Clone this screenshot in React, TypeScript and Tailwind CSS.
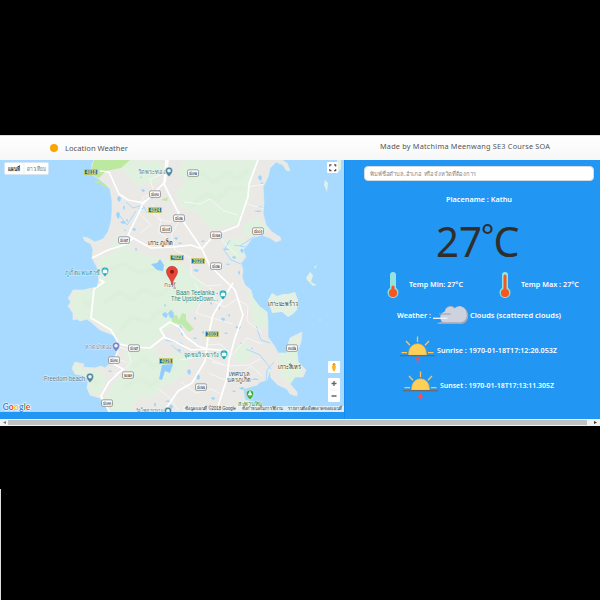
import React from "react";

const land =
  "M94 160L92 164L91 174L99 179L106 185L110 189L112 200L112 213L111 222L108 232L103 239L95 242L88 238L83 237L85 241L91 244L93 250L92 258L97 267L99 280L97 287L83 290L73 290L71 294L68 298L71 302L68 306L73 313L73 320L77 319L80 321L87 319L92 323L100 330L113 335L118 343L117 352L112 362L105 368L101 366L95 368L83 367L84 364L75 362L72 368L75 374L85 376L88 382L87 388L90 395L100 398L105 405L109 413L264 413L258 403L245 400L243 389L257 385L260 382L267 380L270 370L271 378L278 385L287 389L290 394L297 396L297 392L290 384L295 377L303 377L306 370L298 362L297 352L301 342L302 332L290 338L288 345L287 353L278 353L275 347L268 337L268 323L267 312L260 307L253 298L251 290L245 285L242 277L243 270L241 263L246 257L243 250L248 244L252 238L262 235L270 238L276 242L281 240L280 237L272 232L266 225L263 213L264 203L263 187L268 177L270 168L276 162L283 165L286 170L290 171L287 163L282 160Z";

const forests = [
  "M184 160L258 160L253 176L250 196L239 222L228 226L210 229L197 212L180 207L176 194L187 181L177 174Z",
  "M98 259L125 248L153 257L180 263L204 284L195 309L181 321L168 328L152 345L122 346L112 333L96 320L78 320L71 305L72 293L96 289L101 279Z",
  "M125 351L154 346L159 360L178 353L191 357L184 375L164 386L151 398L139 396L129 413L112 412L105 398L117 379L128 369Z",
  "M74 363L83 370L101 370L106 380L98 396L90 391L86 376L74 373Z",
  "M115 164L124 171L136 185L158 182L155 165L141 160Z",
  "M236 346L247 343L253 354L244 364L234 360Z",
  "M278 357L289 343L300 334L297 351L303 375L291 385L280 375Z",
  "M247 284L255 298L266 311L267 328L254 325L251 307Z",
  "M244 224L259 219L270 230L258 235L244 236Z",
  "M118 235L133 239L128 248L110 250Z",
  "M140 163L154 176L165 171L160 161Z",
  "M224 239L246 239L240 252L245 258L231 258Z",
];

const roads = [
  "M100 171L109 172L119 194L128 200L144 203L165 182L168 160",
  "M166 160L164 184L181 218L202 249L210 266L235 290L243 315L235 338L229 360L227 378L216 413",
  "M92 258L108 250L127 244L133 238L151 248L173 247L191 245L202 249L214 235L238 226L248 197L249 184L258 160",
  "M133 238L128 235L145 200",
  "M94 289L104 282L97 278M94 289L91 318L111 330L119 344L134 347L150 348L164 337L176 342L191 350L207 349",
  "M119 344L114 364L123 369L109 382L101 396L110 413",
  "M233 283L213 315L208 337L205 361L192 383L178 391L165 410",
  "M166 339L160 329L170 322L179 327L186 337L198 346L207 349L229 351",
];
const lanes = [
  "M168 172L150 179L154 193L143 197L139 213L151 225L140 233",
  "M152 204L161 220L158 232L169 239M180 211L170 222L158 219L151 210",
  "M181 218L171 235L175 250L191 258L191 275L206 286L221 285",
  "M184 202L200 204L210 199L224 211L238 215",
  "M248 187L264 184M247 204L265 209M217 234L225 244L237 255",
  "M195 284L203 298L196 313L216 319L233 324",
  "M207 345L220 344L232 355L247 338L262 344M212 362L229 366L249 365L260 359",
  "M209 373L222 379L236 378L251 366L262 376M180 360L204 356L224 365",
  "M181 382L196 393L211 389L223 395M159 389L170 398L178 410",
  "M210 287L216 303L225 307L237 299L248 306L247 321L262 333",
  "M114 374L124 370L131 362L128 350L119 347M112 357L126 362",
];
const minorTerrain = [
  "M188 180L202 173L213 183L227 172L237 179L249 169",
  "M191 206L207 193L217 200L229 188L243 189",
  "M105 270L124 264L139 273L157 268L170 279",
  "M103 304L119 292L132 300L144 289L158 297L171 285L182 295",
  "M120 331L131 317L148 322L161 310L174 311",
  "M132 367L145 359L153 366L166 363L176 370M124 387L139 379L151 386L160 379",
  "M83 299L90 306M88 379L98 384",
];
const lakes = [
  [117,198,2,4],[116,214,2,5],[123,207,1,3],[120,222,3,2],[126,220,1,2],[141,190,2,2],[140,177,1,1],[151,197,1,2],[138,208,3,1],[132,229,2,2],[124,230,1,1],[135,249,1,2],[174,238,2,2],[178,243,2,1],[193,270,3,2],[201,241,2,1],[222,249,4,1],[232,257,2,2],[226,264,2,1],[240,250,2,3],[238,272,1,3],[258,177,2,4],[260,183,2,1],[257,207,3,1],[254,211,4,1],[162,314,3,4],[164,305,1,2],[168,313,3,6],[178,327,2,4],[181,333,1,3],[193,338,2,1],[177,350,2,2],[202,332,1,2],[224,333,2,1],[221,319,2,3],[228,315,1,2],[235,327,3,2],[187,371,2,4],[196,376,2,4],[165,401,3,1],[154,404,1,3],[232,391,2,1],[239,388,3,2],[250,393,2,5],[251,379,4,1],[211,398,2,2],[169,406,2,3],[218,307,1,3],[210,303,1,2],[240,343,1,1],[251,348,1,1],[194,318,1,2],[108,371,2,1]
];
const shields: [number, number, string][] = [
  [193,173,"๔๐๓๑"],[155,194,"๔๐๓๐"],[179,218,"๔๐๒"],[166,229,"๔๐๐๕"],[124,240,"๔๐๒๙"],[216,235,"๔๐๒๗"],[258,231,"๔๐๐๖"],[216,266,"๔๐๒"],[134,348,"๔๐๒๙"],[114,360,"๔๐๓๐"],[128,375,"๒๐๑๓"],[107,403,"๔๐๓๓"],[201,387,"๔๐๒๒"],[292,348,"๓๐๔๑"]
];
const highways: [number, number, string][] = [
  [91,172,"4018"],[155,210,"4024"],[177,257.5,"4023"],[198,261,"3020"],[212,334,"3003"],[166,361,"4028"]
];

function Label({ x, y, w, color = "#555", size = 7, children }: {
  x:number; y:number; w:number; color?:string; size?:number; children:string;
}) {
  return <text x={x} y={y} textLength={w} lengthAdjust="spacingAndGlyphs" fill={color} stroke="#f5f9f5" strokeWidth="1" strokeOpacity=".75" paintOrder="stroke" fontSize={size}>{children}</text>;
}

function PlacePin({ x, y, color, kind = "dot" }: {x:number;y:number;color:string;kind?:string}) {
  return <g transform={`translate(${x} ${y})`}>
    <path d="M0 5Q-3.8 1-3.8-1.2A3.8 3.8 0 0 1 3.8-1.2Q3.8 1 0 5Z" fill={color} stroke="#f3faf7" strokeWidth=".6" />
    {kind === "dot" ? <circle cy="-1.2" r="1.8" fill="#e9f4f5" /> : kind === "tree" ? <path d="M-2 0L0-4L2 0Z M0 0V2" fill="#fff" stroke="#fff" strokeWidth=".5" /> : <path d="M-2-2H2V1H-2Z M-1-3H1" fill="#fff" stroke="#fff" strokeWidth=".5" />}
  </g>;
}

function WeatherMap() {
  return <svg className="block h-[252px] w-[344px] shrink-0" viewBox="0 160 344 252" fontFamily="'Liberation Sans', 'Noto Sans', sans-serif">
    <defs><clipPath id="island"><path d={land}/></clipPath><filter id="soft"><feGaussianBlur stdDeviation="1.3" /></filter></defs>
    <path d="M0 160H344V412H0Z" fill="#a8d9ff" />
    <path d={land} fill="#ebe9e6" stroke="#e5eee5" strokeWidth=".7" strokeLinejoin="round" />
    <g clipPath="url(#island)">
      <g fill="#e0f2df" filter="url(#soft)">{forests.map(d => <path key={d} d={d}/>)}</g>
      <g fill="none" stroke="#cfe7d0" strokeWidth="3" opacity=".25" filter="url(#soft)">{minorTerrain.map(d=><path key={d} d={d}/>)}</g>
      <path d="M94 160H130L121 168L106 171L99 178L90 174Z" fill="#bce8a0" />
      <path d="M172 315L177 315L179 320L182 313L186 314L186 320L194 329L189 332L182 325L172 322Z" fill="#bfebaa" />
      <path d="M161 200L168 197L167 201Z" fill="#bce8a0" />
      <path d="M151 264L157 263L160 259L164 265L163 271L157 270Z M162 365L173 364L170 373L165 371L162 380L159 379Z" fill="#91ccff" />
      {lakes.map(([x,y,w,h],i)=><path key={i} d={`M${x} ${y}l${w} ${-h/2}l${w} ${h/2}l${-w/2} ${h}l${-w} ${-h/3}z`} fill="#9bd4fd" />)}
      <g fill="none" stroke="#a8d9ff" strokeWidth="1"><path d="M126 202L133 208L143 205L147 213M120 216L127 225L136 211M165 340L181 343L189 350M171 345L181 353M266 381L267 370L274 362M230 240L224 250L231 260L241 264M234 245L246 247M255 236L240 246M256 326L261 340L270 343M246 349L260 355L271 369"/></g>
      <g fill="none" stroke="#f9f9f9" strokeWidth=".8">{lanes.map(d=><path key={d} d={d}/>)}</g>
      <g fill="none" stroke="#fff" strokeWidth="1.7" strokeLinejoin="round">{roads.map(d=><path key={d} d={d}/>)}</g>
    </g>
    <path d="M98 181L105 184L109 190L102 185ZM94 182L99 180L101 182L97 184Z" fill="#bce8a0"/>
    <g fill="#e3f1e4"><path d="M268 300L272 293L277 296L283 294L288 294L295 292L298 300L297 310L293 314L288 317L282 312L272 313Z"/><path d="M325 180L328 183L327 192L324 185Z M306 278L310 272L313 275L311 282L317 285L313 286L308 281Z M337 160H341V169L338 172Z"/><path d="M314 267L317 265L315 269Z"/><circle cx="320" cy="320" r=".7"/></g>

    {shields.map(([x,y,t])=><g key={`${x}-${y}`}><rect x={x-5.5} y={y-3.2} width="11" height="6.6" rx="1.5" fill="#fafafa" stroke="#8a8a8a" strokeWidth=".8"/><text x={x} y={y+2} textAnchor="middle" fontSize="5.4" textLength="8.6" lengthAdjust="spacingAndGlyphs" fill="#333">{t}</text></g>)}
    {highways.map(([x,y,t])=><g key={`${x}-${y}`}><rect x={x-6.5} y={y-2.3} width="13" height="4.8" fill="#176eae" stroke="#dbcc42" strokeWidth=".7"/><text x={x} y={y+1.9} textAnchor="middle" fontSize="5" fontWeight="700" textLength="10" lengthAdjust="spacingAndGlyphs" fill="#f1e864">{t}</text></g>)}
    <Label x={138} y={174} w={27} color="#647d8d">วัดพระทอง</Label>
    <Label x={148} y={245} w={25} color="#333">เกาะภูเก็ต</Label>
    <Label x={65} y={275} w={35} color="#328fa4">ภูเก็ตแฟนตาซี</Label>
    <Label x={163.5} y={286.5} w={12} size={6} color="#777">กะทู้</Label>
    <Label x={176} y={295} w={42} size={6.7} color="#168b88">Baan Teelanka -</Label>
    <Label x={171} y={301} w={47} size={6.7} color="#168b88">The UpsideDown...</Label>
    <Label x={268} y={306} w={30} color="#333">เกาะมะพร้าว</Label>
    <Label x={85} y={349} w={26} color="#7885bd">หาดป่าตอง</Label>
    <Label x={184} y={357} w={34} color="#168b88">จุดชมวิวเขารัง</Label>
    <Label x={278} y={369} w={23} color="#333">เกาะสิเหร่</Label>
    <Label x={229} y={376} w={20}>เทศบาล</Label><Label x={227} y={382} w={24}>นครภูเก็ต</Label>
    <Label x={44} y={380.5} w={41} color="#587988">Freedom beach</Label>
    <Label x={238} y={405.5} w={24} size={6} color="#33924b">สะพานหิน</Label>
    <Label x={136} y={412.5} w={27} size={6.5} color="#597b87">วัดไชยธาราราม</Label>
    <PlacePin x={169} y={172} color="#52879c"/><PlacePin x={105} y={272} color="#22aac1" kind="place"/>
    <PlacePin x={223} y={295} color="#15a6b3" kind="place"/><PlacePin x={224} y={355} color="#15a6b3" kind="place"/>
    <PlacePin x={116} y={347} color="#7383cd"/><PlacePin x={90} y={378} color="#52879c"/><PlacePin x={250} y={395} color="#28a935" kind="tree"/><PlacePin x={168} y={412} color="#52879c"/>
    <path d="M172 285C171.5 279 166.5 276 166.5 271.5A5.5 5.2 0 0 1 177.5 271.5C177.5 276 172.5 279 172 285Z" fill="#ea4335" stroke="#bb2c23" strokeWidth=".6"/><circle cx="172" cy="271.8" r="2" fill="#811d18"/>
    <g><rect x="4.5" y="162.5" width="44" height="12" rx="1" fill="#fff" stroke="#d9e3e9" strokeWidth=".6"/><path d="M24 163V174" stroke="#e5e5e5" strokeWidth=".6"/><text x="8" y="171" fontSize="6" fontWeight="700" textLength="12" lengthAdjust="spacingAndGlyphs" fill="#333">แผนที่</text><text x="27" y="171" fontSize="6" textLength="19" lengthAdjust="spacingAndGlyphs" fill="#777">ดาวเทียม</text></g>
    <rect x="327" y="162" width="11" height="11" rx="1" fill="#fff"/><path d="M329.8 166.5V164.8H331.5M334 164.8H335.7V166.5M335.7 169V170.7H334M331.5 170.7H329.8V169" fill="none" stroke="#555" strokeWidth="1.2"/>
    <rect x="328" y="361" width="12" height="12" rx="1" fill="#fff"/><circle cx="334" cy="364.6" r="1.5" fill="#e99a12"/><path d="M332 366H336L335.5 369.5H335V371H333V369.5H332.3Z" fill="#f5b82d"/>
    <rect x="328" y="378" width="12" height="24" rx="1" fill="#fff"/><path d="M330 390H338" stroke="#eee" strokeWidth=".7"/><path d="M331.5 383.5H336.5M334 381V386M331.5 396H336.5" stroke="#666" strokeWidth="1.3"/>
    <rect x="183" y="406" width="161" height="6" fill="#eef3f5" opacity=".76"/>
    <g fontSize="4.6" fill="#333"><text x="185" y="410.4" textLength="51" lengthAdjust="spacingAndGlyphs">ข้อมูลแผนที่ ©2018 Google</text><text x="242" y="410.4" textLength="41" lengthAdjust="spacingAndGlyphs">ข้อกำหนดในการใช้งาน</text><text x="288" y="410.4" textLength="54" lengthAdjust="spacingAndGlyphs">รายงานข้อผิดพลาดของแผนที่</text></g>
    <text x="2.5" y="409.5" fontSize="10" textLength="28" lengthAdjust="spacingAndGlyphs" fontFamily="Lato,sans-serif" fontWeight="700" stroke="#fff" strokeWidth="1.2" paintOrder="stroke"><tspan fill="#4285f4">G</tspan><tspan fill="#ea4335">o</tspan><tspan fill="#fbbc05">o</tspan><tspan fill="#4285f4">g</tspan><tspan fill="#34a853">l</tspan><tspan fill="#ea4335">e</tspan></text>
  </svg>;
}

function Thermometer({hot=false}:{hot?:boolean}) {
  return <svg className="h-7 w-3 shrink-0" viewBox="0 0 12 28"><path d="M6 4V21" stroke="#95e3df" strokeWidth="6" strokeLinecap="round"/><circle cx="6" cy="21.5" r="5.5" fill="#88dcda"/><path d={hot ? "M6 5V22" : "M6 16V22"} stroke="#f6571e" strokeWidth="3" strokeLinecap="round"/><circle cx="6" cy="22" r="4.1" fill="#f6571e"/></svg>;
}

function Sun({down=false}:{down?:boolean}) {
  return <svg className="h-7 w-[35px] shrink-0" viewBox="0 0 35 28"><path d="M8.7 19.2V17A8.8 9.2 0 0 1 26.3 17V19.2Z" fill="#ffcf57" stroke="#f2b942" strokeWidth=".7"/><path d="M17.5 .5V6M6 5L10 9.3M29 5L25 9.3M1.5 16.7H7M28 16.7H33.5" fill="none" stroke="#ffc84c" strokeWidth="1.3"/><path d="M0 19.6H35" stroke="#656b70" strokeWidth="1.3"/><path d={down ? "M17.5 22V27M15.5 25L17.5 27L19.5 25" : "M17.5 27V22M15.5 24L17.5 22L19.5 24"} fill="none" stroke="#ff4c5b" strokeWidth="1.4"/></svg>;
}

function Cloud() {
  return <svg className="h-5 w-9 shrink-0" viewBox="0 0 36 20"><path d="M5 19H27C33 19 36 14 35 9C34 3 28-1 22 3C18-1 12 2 12 6L9 8V16Z" fill="#aaa9b8"/><path d="M12 17.5H26C32 17.5 34.5 13 33.5 8C32.5 2 26-1 21.5 3.5C18 0 12.5 2 12 6.5C8 8 6.5 11 7.5 14C8 16.5 10 17.5 12 17.5Z" fill="#ced1de"/><path d="M6 9H17.5" stroke="#9da4b8" strokeWidth="1.1"/><path d="M0 13.3H14.5" stroke="#eef5ff" strokeWidth="1.3"/><path d="M4.5 18.2H26" stroke="#a7a6b5" strokeWidth="1.3"/></svg>;
}

export default function App() {
  return <div className="flex h-[600px] w-[600px] flex-col overflow-hidden bg-black pt-[135px] font-['Noto_Sans','Open_Sans',sans-serif]">
    <header className="flex h-[25px] shrink-0 border-t border-[#ddd] bg-gradient-to-b from-white to-[#f7f7f7] text-[#555]">
      <div className="flex w-[344px] items-center pl-[50px]"><span className="mr-[7px] size-2 rounded-full bg-[#f8a500]"/><svg className="h-4 w-[65px]"><text y="11.3" fontSize="7.3" textLength="63" lengthAdjust="spacingAndGlyphs" fill="#555">Location Weather</text></svg></div>
      <div className="pl-9 pt-[3px]"><svg className="h-4 w-[172px]"><text y="10" fontSize="7.3" textLength="170" lengthAdjust="spacing" fill="#555">Made by Matchima Meenwang SE3 Course SOA</text></svg></div>
    </header>
    <main className="flex h-[259px] shrink-0 bg-[#2196f3]">
      <WeatherMap/>
      <section className="flex w-64 flex-col border-l border-[#168bed] pt-[6px] text-[7px] font-semibold text-white">
        <div className="ml-[19px] flex h-[15px] w-[230px] items-center rounded-sm border border-[#d2dce5] bg-white pl-[5px] font-normal text-[#888]"><svg className="h-3 w-[108px]"><text y="8.3" fontSize="6" textLength="106" lengthAdjust="spacingAndGlyphs" fill="#888">พิมพ์ชื่อตำบล,อำเภอ หรือจังหวัดที่ต้องการ</text></svg></div>
        <div className="mt-[11px] h-4 pl-[101px]"><svg className="h-4 w-[67px]"><text y="9.5" fontSize="7" textLength="66" lengthAdjust="spacingAndGlyphs" fill="#fff">Placename : Kathu</text></svg></div>
        <div className="mt-[10px] h-[43px] pl-[92px]"><svg className="h-[43px] w-[86px] overflow-visible" fill="#302e2c" fontWeight="400"><text x="-1" y="38.5" fontSize="41" textLength="46" lengthAdjust="spacingAndGlyphs">27</text><circle cx="50.5" cy="11" r="4" fill="none" stroke="#302e2c" strokeWidth="2.2"/><text x="56.5" y="38.5" fontSize="41" textLength="26" lengthAdjust="spacingAndGlyphs">C</text></svg></div>
        <div className="mt-[10px] flex h-7 items-center pl-[42px]"><Thermometer/><svg className="ml-[10px] h-4 w-[56px]"><text y="10" fontSize="6.8" textLength="54" lengthAdjust="spacingAndGlyphs" fill="#fff">Temp Min: 27°C</text></svg><div className="w-[34px]"/><Thermometer hot/><svg className="ml-[10px] h-4 w-[60px]"><text y="10" fontSize="6.8" textLength="58" lengthAdjust="spacingAndGlyphs" fill="#fff">Temp Max : 27°C</text></svg></div>
        <div className="mt-[6px] flex h-5 items-center pl-[52px]"><svg className="mr-px h-4 w-[35px]"><text y="10.5" fontSize="6.8" textLength="34" lengthAdjust="spacingAndGlyphs" fill="#fff">Weather :</text></svg><Cloud/><svg className="ml-[1px] h-4 w-[94px]"><text y="10.5" fontSize="6.8" textLength="91" lengthAdjust="spacingAndGlyphs" fill="#fff">Clouds (scattered clouds)</text></svg></div>
        <div className="mt-[11px] flex h-7 items-center pl-[55px]"><Sun/><svg className="ml-[2px] h-4 w-[122px]"><text y="10.5" fontSize="6.8" textLength="120" lengthAdjust="spacingAndGlyphs" fill="#fff">Sunrise : 1970-01-18T17:12:26.053Z</text></svg></div>
        <div className="mt-[7px] flex h-7 items-center pl-[58px]"><Sun down/><svg className="ml-[2px] h-4 w-[117px]"><text y="10.5" fontSize="6.8" textLength="114" lengthAdjust="spacingAndGlyphs" fill="#fff">Sunset : 1970-01-18T17:13:11.305Z</text></svg></div>
      </section>
    </main>
    <div className="flex h-[7px] shrink-0 items-center justify-between bg-[#f1f1f1] px-[3px] text-[#555]"><svg className="size-[3px]" viewBox="0 0 3 3"><path d="M3 0V3L0 1.5Z" fill="#777"/></svg><div className="h-[5px] w-[579px] -translate-x-[3px] bg-[#c1c1c1]"/><svg className="size-[3px]" viewBox="0 0 3 3"><path d="M0 0V3L3 1.5Z" fill="#333"/></svg></div>
    <div className="mt-[63px] h-[111px] w-px bg-[#ddd]"/>
  </div>;
}
